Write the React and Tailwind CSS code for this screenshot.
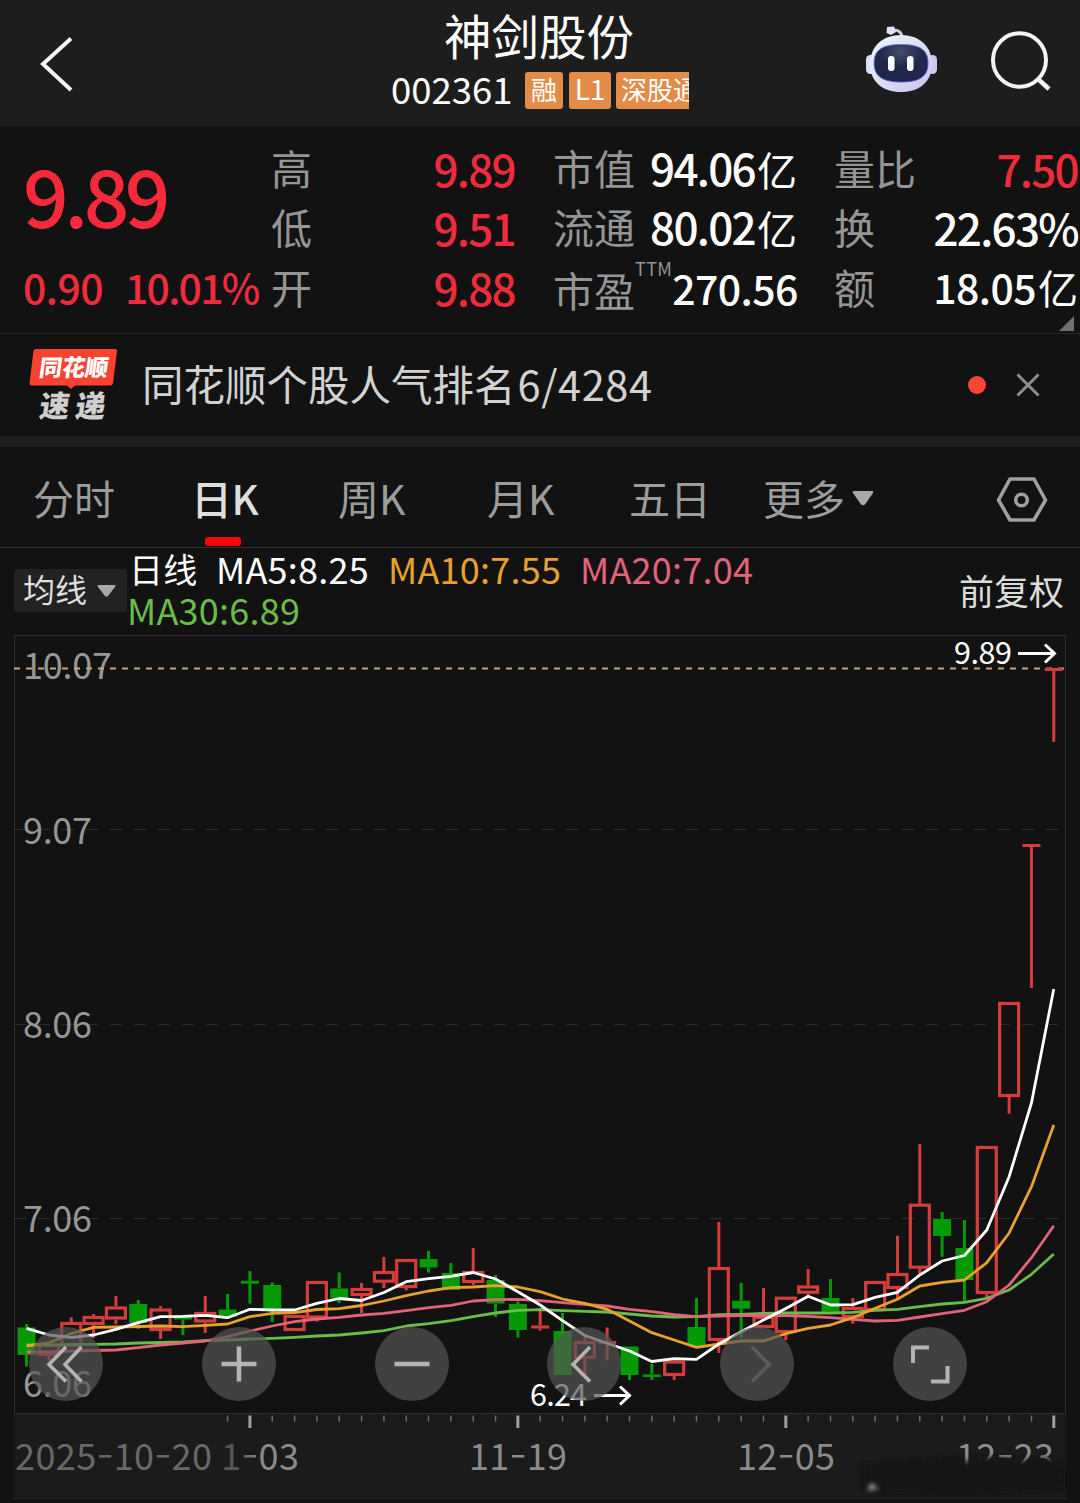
// Candle spacing in the chart; index 0 is 2025-10-20, index 46 is 12-23.
const STEP = 22.33;
const xAt = (i) => 26.6 + STEP * i;

// [up, high, bodyTop, bodyBottom, low] in chart pixels
const CANDLES = [
  [0, 1324, 1327.5, 1355, 1366.5],
  [1, 1344, 1344, 1356, 1362],
  [1, 1317.5, 1322, 1347, 1347],
  [1, 1314, 1316, 1325, 1338],
  [1, 1296, 1306.5, 1319.5, 1324],
  [0, 1300, 1304, 1323, 1329],
  [1, 1306, 1308.5, 1331, 1339],
  [0, 1316.5, 1317, 1319.5, 1335],
  [1, 1296, 1312, 1322.5, 1333],
  [0, 1294, 1309.5, 1317, 1317],
  [0, 1271, 1280.7, 1283.7, 1303.5],
  [0, 1282.5, 1285, 1310, 1322],
  [1, 1315, 1315, 1331, 1331],
  [1, 1281, 1281, 1318.5, 1321.5],
  [0, 1272.5, 1288.5, 1298.5, 1303],
  [1, 1283, 1288, 1296, 1313],
  [1, 1257, 1271, 1282.7, 1288],
  [1, 1259, 1259, 1288, 1290.5],
  [0, 1251, 1259, 1267.5, 1272.5],
  [0, 1263, 1273, 1290, 1290],
  [1, 1248, 1271, 1283, 1285],
  [0, 1275, 1280, 1303.5, 1317],
  [0, 1301.5, 1304, 1330, 1337.5],
  [1, 1308, 1325.5, 1328.5, 1330.5],
  [0, 1313, 1331, 1375, 1375],
  [1, 1337, 1341, 1358.7, 1375],
  [1, 1327.5, 1341, 1344, 1360.6],
  [0, 1346.5, 1346.5, 1375, 1380],
  [0, 1364, 1374.5, 1377, 1380],
  [1, 1360.5, 1360.5, 1376, 1380],
  [0, 1298, 1327, 1346, 1346],
  [1, 1222, 1267, 1341, 1353],
  [0, 1283, 1300.7, 1308.7, 1338],
  [1, 1288, 1316, 1328, 1328],
  [1, 1296.7, 1296.7, 1333, 1340],
  [1, 1269, 1285.5, 1293.7, 1296],
  [0, 1279, 1298, 1311.7, 1311.7],
  [1, 1298, 1307, 1318, 1323.7],
  [1, 1281, 1281, 1311, 1311],
  [1, 1235.7, 1273, 1289, 1300],
  [1, 1144, 1203.7, 1268.7, 1275],
  [0, 1212, 1219, 1236, 1256.7],
  [0, 1220, 1248, 1280, 1301.7],
  [1, 1146, 1146, 1294, 1298],
  [1, 1002, 1002, 1097, 1113.6],
  [1, 844, 844, 847, 988],
  [1, 668, 668, 671, 742],
];

const AVERAGES = [
  {
    color: "#69bd48",
    ys: [
      1345, 1345, 1344.5, 1344.3, 1344, 1343, 1342.5, 1342, 1340.7, 1340, 1339, 1338.3, 1337.3, 1336, 1335, 1333,
      1330.7, 1326, 1323.7, 1320.7, 1316.7, 1313, 1310.3, 1309.7, 1310.7, 1311.3, 1312, 1314, 1316, 1317, 1316.7,
      1314.7, 1314.3, 1313.5, 1313, 1313, 1313, 1312.3, 1310.3, 1309.3, 1306.7, 1304, 1302.3, 1298.3, 1290, 1274.3,
      1254,
    ],
  },
  {
    color: "#e3637a",
    ys: [
      1352, 1352, 1351, 1350.5, 1350, 1347.7, 1345, 1343, 1341, 1336.7, 1331, 1326, 1321.7, 1319, 1317.3, 1315,
      1313.3, 1310.7, 1307.7, 1305.3, 1301, 1299.7, 1299.3, 1300.7, 1302.7, 1304.3, 1306, 1309.3, 1311.7, 1314.7,
      1316.7, 1316, 1315.5, 1315.5, 1315.7, 1316.3, 1317.7, 1319.3, 1321, 1320.3, 1317, 1313.7, 1310.3, 1301.7, 1285,
      1257.7, 1225.7,
    ],
  },
  {
    color: "#e8a12c",
    ys: [
      1346, 1343, 1333.5, 1327.3, 1327, 1326.5, 1326, 1326.7, 1325.3, 1324, 1316.7, 1313.3, 1312.7, 1309.5, 1308.7,
      1305.5, 1301, 1295.7, 1291, 1287.7, 1287, 1285.7, 1287, 1291.7, 1299, 1303.3, 1309.3, 1321, 1332.7, 1340,
      1347.3, 1344, 1341, 1341, 1333.7, 1328.3, 1325, 1317.7, 1308.3, 1299.3, 1286, 1282.3, 1280, 1262.7, 1233,
      1186.7, 1125,
    ],
  },
  {
    color: "#ffffff",
    ys: [
      1328.3, 1335, 1337.5, 1335, 1329.3, 1322.7, 1316.7, 1316.3, 1315.3, 1317.7, 1309.3, 1310, 1310, 1303.3, 1298.5,
      1300.5, 1292.5, 1281.7, 1278.7, 1276.3, 1272.5, 1279, 1291.7, 1305, 1320.7, 1335.5, 1343.3, 1351, 1361.5,
      1358.7, 1359.3, 1344, 1331.7, 1320, 1308.5, 1296.3, 1305, 1304.7, 1297.3, 1292.3, 1275, 1261, 1255.5, 1230,
      1176.7, 1103, 989,
    ],
  },
];

const TABS = ["分时", "日K", "周K", "月K", "五日"];

function Candle({ i, data }) {
  const [up, high, top, bottom, low] = data;
  const x = xAt(i);
  const color = up ? "#d43d3b" : "#059a05";
  const flat = bottom - top < 4;
  return (
    <g fill={color}>
      {top > high && <rect x={x - 1.5} y={high} width="3" height={top - high} />}
      {low > bottom && <rect x={x - 1.5} y={bottom} width="3" height={low - bottom} />}
      {up && !flat ? (
        <rect x={x - 9.5} y={top + 1.5} width="19" height={bottom - top - 3} fill="none" stroke={color} strokeWidth="3.2" />
      ) : (
        <rect x={x - 9} y={top} width="18" height={bottom - top} />
      )}
    </g>
  );
}

// The date separator is a wide, light hyphen set slightly above the digits' middle.
function DateLabel({ x, width, fill, parts }) {
  return (
    <text x={x} y="1470" textLength={width} fill={fill}>
      {parts.map((part, i) => (
        <tspan key={i}>
          {i > 0 && <tspan fontSize="50" fontWeight="300">-</tspan>}
          {part}
        </tspan>
      ))}
    </text>
  );
}

function Chart() {
  return (
    <svg className="block" width="1080" height="868" viewBox="0 635 1080 868">
      <rect x="14" y="1413" width="1052" height="85" fill="#1b1b1b" />
      <path d="M14 1498.5H1066" stroke="#242424" />
      <path d="M14 635.5H1066M14.5 635V1413M1065.5 635V1413M14 1413.5H1066" stroke="#303030" fill="none" />
      <path d="M14 829.5H1066M14 1024.5H1066M14 1218.5H1066" stroke="#2d2d2d" strokeDasharray="12 12" />

      <g fill="#979797" fontSize="36">
        <text x="23" y="679" textLength="89">10.07</text>
        <text x="23" y="843.5" textLength="69">9.07</text>
        <text x="23" y="1038" textLength="69">8.06</text>
        <text x="23" y="1231.5" textLength="69">7.06</text>
        <text x="23" y="1397" textLength="69">6.06</text>
      </g>
      <path d="M14 668.5H1066" stroke="#c8a87a" strokeWidth="2" strokeDasharray="6 6" />

      {CANDLES.map((c, i) => (
        <Candle key={i} i={i} data={c} />
      ))}
      {AVERAGES.map(({ color, ys }) => (
        <polyline
          key={color}
          points={ys.map((y, i) => `${xAt(i)},${y}`).join(" ")}
          fill="none"
          stroke={color}
          strokeWidth="2.8"
          strokeLinejoin="round"
        />
      ))}

      <g fill="#fff" fontSize="30.5">
        <text x="954" y="663.5" textLength="58">9.89</text>
        <text x="530" y="1405.5" textLength="57">6.24</text>
      </g>
      <path
        d="M1018 653.5H1054M1045 644.5L1054.5 653.5L1045 662.5M594 1395.5H629M620 1386.5L629.5 1395.5L620 1404.5"
        stroke="#fff"
        strokeWidth="3"
        fill="none"
      />

      {CANDLES.map((_, i) => {
        if (i < 9) return null;
        const major = i % 12 === 10;
        return (
          <rect
            key={i}
            x={xAt(i) - (major ? 1.5 : 0.75)}
            y="1415.5"
            width={major ? 3 : 1.5}
            height={major ? 12.5 : 6}
            fill={major ? "#a0a0a0" : "#6c6c6c"}
          />
        );
      })}
      <g fontSize="36">
        <DateLabel x="15" width="197" fill="#686868" parts={["2025", "10", "20"]} />
        <DateLabel x="221" width="78" fill="url(#fade)" parts={["1", "03"]} />
        <DateLabel x="469" width="98" fill="#8b8b8b" parts={["11", "19"]} />
        <DateLabel x="737" width="98" fill="#8b8b8b" parts={["12", "05"]} />
        <DateLabel x="956" width="98" fill="#8b8b8b" parts={["12", "23"]} />
      </g>
      {/* smudge over the last date */}
      <defs>
        <linearGradient id="fade" gradientUnits="userSpaceOnUse" x1="236" y1="0" x2="262" y2="0">
          <stop offset="0" stopColor="#575757" />
          <stop offset="1" stopColor="#8b8b8b" />
        </linearGradient>
        <filter id="soft" x="-20%" y="-50%" width="140%" height="200%">
          <feGaussianBlur stdDeviation="2" />
        </filter>
      </defs>
      <path
        d="M862 1465L900 1461L950 1458L963 1459L966 1464L970 1458L1000 1457L1024 1461L1036 1457L1058 1460L1064 1470V1490L960 1493L862 1492Z"
        fill="#181818"
        filter="url(#soft)"
      />
      <path d="M867 1491L871 1482L879 1489Z" fill="#8a8a8a" filter="url(#soft)" />
    </svg>
  );
}

function RoundButton({ children }) {
  return (
    <div className="flex h-[74px] w-[74px] items-center justify-center rounded-full bg-[#555555]/70">
      <svg width="74" height="74" viewBox="0 0 74 74" fill="none" stroke="#b4b4b4" strokeWidth="3.6">
        {children}
      </svg>
    </div>
  );
}

function Robot() {
  return (
    <svg width="72" height="68" viewBox="0 0 72 68">
      <defs>
        <linearGradient id="shell" x1="0" y1="0" x2="1" y2="1">
          <stop offset="0" stopColor="#f2f7ff" />
          <stop offset=".55" stopColor="#dcdcf6" />
          <stop offset="1" stopColor="#c9c0ee" />
        </linearGradient>
        <radialGradient id="visor" cx=".5" cy=".2" r=".9">
          <stop offset="0" stopColor="#454d6c" />
          <stop offset=".45" stopColor="#20284a" />
          <stop offset="1" stopColor="#1e2654" />
        </radialGradient>
        <linearGradient id="rim" x1="0" y1="0" x2="1" y2="1">
          <stop offset="0" stopColor="#6f8fd8" />
          <stop offset="1" stopColor="#5a3cc4" />
        </linearGradient>
      </defs>
      <path d="M26 4.500C33 3 37 6 37 12" fill="none" stroke="#c8cce6" strokeWidth="3" />
      <path d="M22 1L29 0.500L31 6L26 9L21.500 7Z" fill="#dfe3f5" />
      <rect x="1" y="29" width="9" height="19" rx="4.500" fill="#dcdff5" />
      <rect x="63" y="29" width="9" height="19" rx="4.500" fill="#cfc9ef" />
      <path d="M36 9C54 9 67 20 67 38C67 56 54 66 36 66C18 66 5 56 5 38C5 20 18 9 36 9Z" fill="url(#shell)" />
      <path
        d="M36 18.500C55 18.500 63 24 63 37C63 50 55 56 36 56C17 56 9 50 9 37C9 24 17 18.500 36 18.500Z"
        fill="url(#visor)"
        stroke="url(#rim)"
        strokeWidth="1"
      />
      <rect x="23" y="30" width="6.500" height="15" rx="3" fill="#fff" />
      <rect x="42" y="30" width="6.500" height="15" rx="3" fill="#fff" />
    </svg>
  );
}

function Header() {
  return (
    <header className="flex h-[126px] bg-[#1d1d1d] text-white">
      <div className="w-[391px] pt-[34px] pl-[38px]">
        <svg width="40" height="60" viewBox="0 0 40 60" fill="none" stroke="#f4f4f4" strokeWidth="4">
          <path d="M33 4.500L5 30L33 56" />
        </svg>
      </div>
      <div className="w-[298px]">
        <div className="mt-[8px] pl-[53px] text-[47.5px] leading-[54px] whitespace-nowrap">神剑股份</div>
        <div className="mt-[10px] flex h-[37px] items-center overflow-hidden whitespace-nowrap">
          <span className="-mt-[4px] w-[134px] shrink-0 text-[36.5px] leading-[34px]">002361</span>
          <span className="mr-[6px] h-[37px] w-[38px] shrink-0 rounded-[3px] bg-[#e38c47] text-center text-[26px] leading-[34px]">
            融
          </span>
          <span className="mr-[5px] h-[37px] w-[42px] shrink-0 rounded-[3px] bg-[#e38c47] text-center text-[28px] leading-[33px]">
            L1
          </span>
          <span className="h-[37px] shrink-0 rounded-[3px] bg-[#e38c47] px-[5px] text-[26px] leading-[34px]">深股通</span>
        </div>
      </div>
      <div className="flex flex-1 pl-[176px]">
        <div className="mt-[26px] w-[123px]">
          <Robot />
        </div>
        <svg className="mt-[28px]" width="64" height="64" viewBox="0 0 64 64" fill="none" stroke="#f4f4f4" strokeWidth="4">
          <ellipse cx="31.500" cy="32" rx="26.500" ry="26.800" />
          <path d="M50 51L61 61" strokeWidth="4.500" />
        </svg>
      </div>
    </header>
  );
}

function Stat({ label, value, unit, note, small, red }) {
  return (
    <div className="flex h-[59.5px] items-center justify-between whitespace-nowrap">
      <span className={`flex text-[41px] leading-[50px] text-[#959595] ${note ? "mt-[4px]" : "-mt-[2px]"}`}>
        {label}
        {note && <span className="-mt-[11px] text-[18px] leading-[30px] tracking-[.02em]">{note}</span>}
      </span>
      <span className={`flex items-baseline font-medium ${red ? "text-[#ee2c3c]" : "text-white"}`}>
        <span
          className={
            small ? "text-[41px] leading-[50px] tracking-[-.6px]" : "text-[44px] leading-[50px] tracking-[-1.7px]"
          }
        >
          {value}
        </span>
        {unit && <span className="ml-[2px] text-[40px] leading-[50px] font-normal">{unit}</span>}
      </span>
    </div>
  );
}

function Quote() {
  return (
    <section className="relative flex h-[208px] border-b border-[#262626] pt-[12px]">
      <div className="w-[271px] pl-[23px] font-medium whitespace-nowrap text-[#f8293b]">
        <div className="mt-[10px] text-[80px] leading-[90px] tracking-[-4.4px]">9.89</div>
        <div className="mt-[23px] flex text-[41px] leading-[50px] text-[#ee2c3c]">
          <span className="w-[102px] tracking-[-.6px]">0.90</span>
          <span className="tracking-[-1.8px]">10.01%</span>
        </div>
      </div>
      <div className="w-[282px] pr-[38px]">
        <Stat label="高" value="9.89" red />
        <Stat label="低" value="9.51" red />
        <Stat label="开" value="9.88" red />
      </div>
      <div className="w-[281px] pr-[37px]">
        <Stat label="市值" value="94.06" unit="亿" />
        <Stat label="流通" value="80.02" unit="亿" />
        <Stat label="市盈" note="TTM" value="270.56" small />
      </div>
      <div className="w-[246px] pr-[2px]">
        <Stat label="量比" value="7.50" red />
        <Stat label="换" value="22.63%" />
        <Stat label="额" value="18.05" unit="亿" small />
      </div>
      <svg className="absolute right-[6px] bottom-[2px]" width="15" height="15">
        <path d="M15 0V15H0Z" fill="#6f6f6f" />
      </svg>
    </section>
  );
}

function News() {
  return (
    <section className="flex h-[113px] items-center border-b-[11px] border-[#1d1d1d]">
      <svg className="ml-[28px]" width="92" height="76" viewBox="0 0 92 76">
        <path
          d="M8 2H87Q89.500 2 89 4L85 36Q84.500 38.500 82 38.500H47L43 42L39 38.500H4Q1 38.500 1.500 36L5.500 4Q6 2 8 2Z"
          fill="#fb4130"
        />
        <g fontWeight="900" transform="skewX(-8)">
          <text x="14.500" y="29.500" fontSize="23" textLength="69" fill="#fff">同花顺</text>
          <text x="20" y="70" fontSize="30" textLength="66" fill="#cfcfcf">速递</text>
        </g>
      </svg>
      <span className="-mt-[4px] ml-[22px] text-[41.5px] leading-[50px] whitespace-nowrap text-[#d2d2d2]">
        同花顺个股人气排名<span className="ml-[2px] tracking-[.6px]">6/4284</span>
      </span>
      <span className="mr-[30px] ml-auto h-[18px] w-[18px] rounded-full bg-[#fc4634]" />
      <svg className="mr-[40px]" width="24" height="24" viewBox="0 0 24 24" stroke="#8e8e8e" strokeWidth="3">
        <path d="M1.500 1.500L22.500 22.500M22.500 1.500L1.500 22.500" />
      </svg>
    </section>
  );
}

function Tabs() {
  return (
    <nav className="grid h-[101px] grid-cols-[158px_147px_149px_142px_134px_233px_1fr] border-b border-[#333333] pl-[33px] text-[41px] leading-[100px] whitespace-nowrap text-[#9c9c9c]">
      {TABS.map((tab) =>
        tab === "日K" ? (
          <span key={tab} className="relative font-medium tracking-[-.5px] text-[#dedede]">
            {tab}
            <span className="absolute bottom-[1px] left-[14px] h-[9px] w-[36px] rounded-[3px] bg-[#f20a0a]" />
          </span>
        ) : (
          <span key={tab}>{tab}</span>
        )
      )}
      <span className="flex items-center">
        更多
        <svg className="mt-[2px] ml-[7px]" width="22" height="15">
          <path d="M2 0H20Q22 0 21 2L13 13.500Q11 15 9 13.500L1 2Q0 0 2 0Z" fill="#a8a8a8" />
        </svg>
      </span>
      <svg className="mt-[28px]" width="52" height="50" viewBox="0 0 52 50" fill="none" stroke="#a0a0a0" strokeWidth="3.600">
        <path d="M14 4H38L49.500 25L38 45H14L2.500 25Z" strokeLinejoin="round" />
        <circle cx="25.500" cy="25" r="5.800" />
      </svg>
    </nav>
  );
}

function Legend() {
  return (
    <section className="flex h-[87px] whitespace-nowrap">
      <div className="mt-[21px] ml-[14px] flex h-[43px] w-[113px] items-center rounded-[4px] bg-[#222222] pl-[9px] text-[32px] leading-[40px] text-[#dedede]">
        <span className="-mt-[6px]">均线</span>
        <svg className="ml-[10px]" width="19" height="12">
          <path d="M1.500 0H17.500Q19 0 18 2L11 11Q9.500 12.500 8 11L1 2Q0 0 1.500 0Z" fill="#a8a8a8" />
        </svg>
      </div>
      <div className="pl-[2px] text-[36px] leading-[41px] tracking-[.25px]">
        <div className="flex">
          <span className="w-[87px] text-[34px] text-white">日线</span>
          <span className="w-[172px] text-white">MA5:8.25</span>
          <span className="w-[192px] text-[#e8a12c]">MA10:7.55</span>
          <span className="text-[#e3637a]">MA20:7.04</span>
        </div>
        <div className="-ml-[2px] text-[#69bd48]">MA30:6.89</div>
      </div>
      <div className="mr-[16px] ml-auto text-[35px] leading-[83px] text-[#dcdcdc]">前复权</div>
    </section>
  );
}

export default function App() {
  return (
    <div className="h-[1503px] w-[1080px] overflow-hidden bg-[#121212] font-['Noto_Sans_CJK_SC',sans-serif]">
      <Header />
      <Quote />
      <News />
      <Tabs />
      <Legend />
      <div className="relative">
        <Chart />
        <div className="absolute top-[692px] left-[29px] flex gap-[98.8px]">
          <RoundButton>
            <path d="M37 20L20 37.500L37 54.500M52.500 20L36 37.500L52.500 54.500" />
          </RoundButton>
          <RoundButton>
            <path d="M19.500 37H54.500M37 19.500V54.500" strokeWidth="4.500" />
          </RoundButton>
          <RoundButton>
            <path d="M19.500 37H54.500" strokeWidth="4.500" />
          </RoundButton>
          <RoundButton>
            <path d="M43 20L26 37.500L43 54.500" />
          </RoundButton>
          <RoundButton>
            <path d="M32 20L49 37.500L32 54.500" stroke="#5c5c5c" />
          </RoundButton>
          <RoundButton>
            <path d="M20 36V20.500H36M38 54.500H54.500V39" strokeWidth="4" />
          </RoundButton>
        </div>
      </div>
    </div>
  );
}
